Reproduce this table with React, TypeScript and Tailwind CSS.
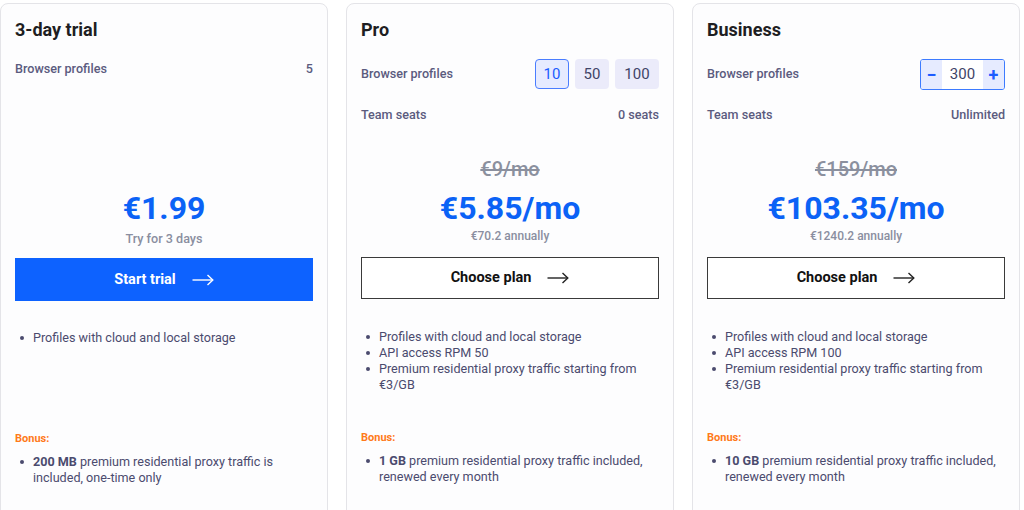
import React from "react";

const Arrow = ({ color }: { color: string }) => (
  <svg width="22" height="12" viewBox="0 0 22 12" fill="none" className="ml-[16px]">
    <path d="M0.5 6H20.5" stroke={color} strokeWidth="1.4" />
    <path d="M15.5 1L20.8 6L15.5 11" stroke={color} strokeWidth="1.4" fill="none" />
  </svg>
);

const Bullet = ({ children }: { children: React.ReactNode }) => (
  <li className="flex items-start">
    <span className="w-[18px] flex-none flex justify-start pl-[5px] pt-[6px]">
      <span className="w-[4px] h-[4px] rounded-full bg-[#4b4b6e]" />
    </span>
    <span>{children}</span>
  </li>
);

const Row = ({ label, children, h }: { label: string; children: React.ReactNode; h: string }) => (
  <div className={`flex items-center justify-between ${h}`}>
    <span className="text-[12.6px] font-medium text-[#5b5b7e]">{label}</span>
    {children}
  </div>
);

export default function App() {
  const rob = { fontFamily: "Roboto, 'Liberation Sans', sans-serif" };
  return (
    <div className="w-[1024px] h-[510px] overflow-hidden bg-white" style={rob}>
      <div className="flex gap-[18px] pt-[3px] pl-0">
        {/* Card 1 */}
        <div className="w-[328px] h-[530px] flex-none border border-[#e4e4e8] rounded-[8px] bg-[#fdfdfe] px-[14px] pt-[14px]">
          <div className="h-[138px]">
            <div className="text-[18px] leading-[24px] font-bold text-[#1e1e22]">3-day trial</div>
            <div className="mt-[17px]">
              <Row label="Browser profiles" h="h-[20px]">
                <span className="text-[12.6px] font-medium text-[#5b5b7e]">5</span>
              </Row>
            </div>
          </div>
          <div className="h-[26px]" />
          <div className="mt-[7px] text-center text-[32px] leading-[38px] font-bold text-[#0b62f6]">€1.99</div>
          <div className="mt-[4px] text-center text-[12.6px] leading-[16px] font-medium text-[#8a8ea0]">Try for 3 days</div>
          <button className="mt-[11px] w-full h-[43px] bg-[#0d62ff] flex items-center justify-center text-white text-[14.5px] font-bold">
            Start trial
            <Arrow color="#ffffff" />
          </button>
          <div className="mt-[29px] h-[102px]">
            <ul className="text-[12.6px] leading-[16px] text-[#4b4b6e]">
              <Bullet>Profiles with cloud and local storage</Bullet>
            </ul>
          </div>
          <div className="text-[11px] leading-[14px] font-bold text-[#ff7a1a]">Bonus:</div>
          <ul className="mt-[8px] text-[12.6px] leading-[16px] text-[#4b4b6e]">
            <Bullet>
              <b className="font-bold">200 MB</b> premium residential proxy traffic is included, one-time only
            </Bullet>
          </ul>
        </div>

        {/* Card 2 */}
        <div className="w-[328px] h-[530px] flex-none border border-[#e4e4e8] rounded-[8px] bg-[#fdfdfe] px-[14px] pt-[14px]">
          <div className="h-[138px]">
            <div className="text-[18px] leading-[24px] font-bold text-[#1e1e22]">Pro</div>
            <div className="mt-[17px]">
              <Row label="Browser profiles" h="h-[30px]">
                <div className="flex gap-[6px]">
                  <span className="w-[34px] h-[30px] flex items-center justify-center rounded-[4px] border border-[#4a7dff] bg-[#e6ebff] text-[15px] text-[#1a5cff]">10</span>
                  <span className="w-[34px] h-[30px] flex items-center justify-center rounded-[4px] bg-[#ebebfa] text-[15px] text-[#3f4468]">50</span>
                  <span className="w-[44px] h-[30px] flex items-center justify-center rounded-[4px] bg-[#ebebfa] text-[15px] text-[#3f4468]">100</span>
                </div>
              </Row>
            </div>
            <div className="mt-[16px]">
              <Row label="Team seats" h="h-[20px]">
                <span className="text-[12.6px] font-medium text-[#5b5b7e]">0 seats</span>
              </Row>
            </div>
          </div>
          <div className="h-[26px] text-center text-[20px] leading-[26px] font-medium text-[#8b909e] line-through">€9/mo</div>
          <div className="mt-[7px] text-center text-[32px] leading-[38px] font-bold text-[#0b62f6]">€5.85/mo</div>
          <div className="mt-[1px] text-center text-[12px] leading-[16px] font-medium text-[#8a8ea0]">€70.2 annually</div>
          <button className="mt-[13px] w-full h-[42px] border border-[#3a3a3a] bg-white flex items-center justify-center text-[#111] text-[14.5px] font-bold">
            Choose plan
            <Arrow color="#222222" />
          </button>
          <div className="mt-[30px] h-[102px]">
            <ul className="text-[12.6px] leading-[16px] text-[#4b4b6e]">
              <Bullet>Profiles with cloud and local storage</Bullet>
              <Bullet>API access RPM 50</Bullet>
              <Bullet>Premium residential proxy traffic starting from €3/GB</Bullet>
            </ul>
          </div>
          <div className="text-[11px] leading-[14px] font-bold text-[#ff7a1a]">Bonus:</div>
          <ul className="mt-[8px] text-[12.6px] leading-[16px] text-[#4b4b6e]">
            <Bullet>
              <b className="font-bold">1 GB</b> premium residential proxy traffic included, renewed every month
            </Bullet>
          </ul>
        </div>

        {/* Card 3 */}
        <div className="w-[328px] h-[530px] flex-none border border-[#e4e4e8] rounded-[8px] bg-[#fdfdfe] px-[14px] pt-[14px]">
          <div className="h-[138px]">
            <div className="text-[18px] leading-[24px] font-bold text-[#1e1e22]">Business</div>
            <div className="mt-[17px]">
              <Row label="Browser profiles" h="h-[30px]">
                <div className="flex w-[85px] h-[31px] border border-[#3d7bff] rounded-[3px] overflow-hidden">
                  <span className="w-[21px] flex items-center justify-center bg-[#e6ebff] text-[#1a5cff] text-[18px] font-bold">−</span>
                  <span className="flex-1 flex items-center justify-center bg-white text-[15px] text-[#3f4468]">300</span>
                  <span className="w-[21px] flex items-center justify-center bg-[#e6ebff] text-[#1a5cff] text-[18px] font-bold">+</span>
                </div>
              </Row>
            </div>
            <div className="mt-[16px]">
              <Row label="Team seats" h="h-[20px]">
                <span className="text-[12.6px] font-medium text-[#5b5b7e]">Unlimited</span>
              </Row>
            </div>
          </div>
          <div className="h-[26px] text-center text-[20px] leading-[26px] font-medium text-[#8b909e] line-through">€159/mo</div>
          <div className="mt-[7px] text-center text-[32px] leading-[38px] font-bold text-[#0b62f6]">€103.35/mo</div>
          <div className="mt-[1px] text-center text-[12px] leading-[16px] font-medium text-[#8a8ea0]">€1240.2 annually</div>
          <button className="mt-[13px] w-full h-[42px] border border-[#3a3a3a] bg-white flex items-center justify-center text-[#111] text-[14.5px] font-bold">
            Choose plan
            <Arrow color="#222222" />
          </button>
          <div className="mt-[30px] h-[102px]">
            <ul className="text-[12.6px] leading-[16px] text-[#4b4b6e]">
              <Bullet>Profiles with cloud and local storage</Bullet>
              <Bullet>API access RPM 100</Bullet>
              <Bullet>Premium residential proxy traffic starting from €3/GB</Bullet>
            </ul>
          </div>
          <div className="text-[11px] leading-[14px] font-bold text-[#ff7a1a]">Bonus:</div>
          <ul className="mt-[8px] text-[12.6px] leading-[16px] text-[#4b4b6e]">
            <Bullet>
              <b className="font-bold">10 GB</b> premium residential proxy traffic included, renewed every month
            </Bullet>
          </ul>
        </div>
      </div>
    </div>
  );
}
